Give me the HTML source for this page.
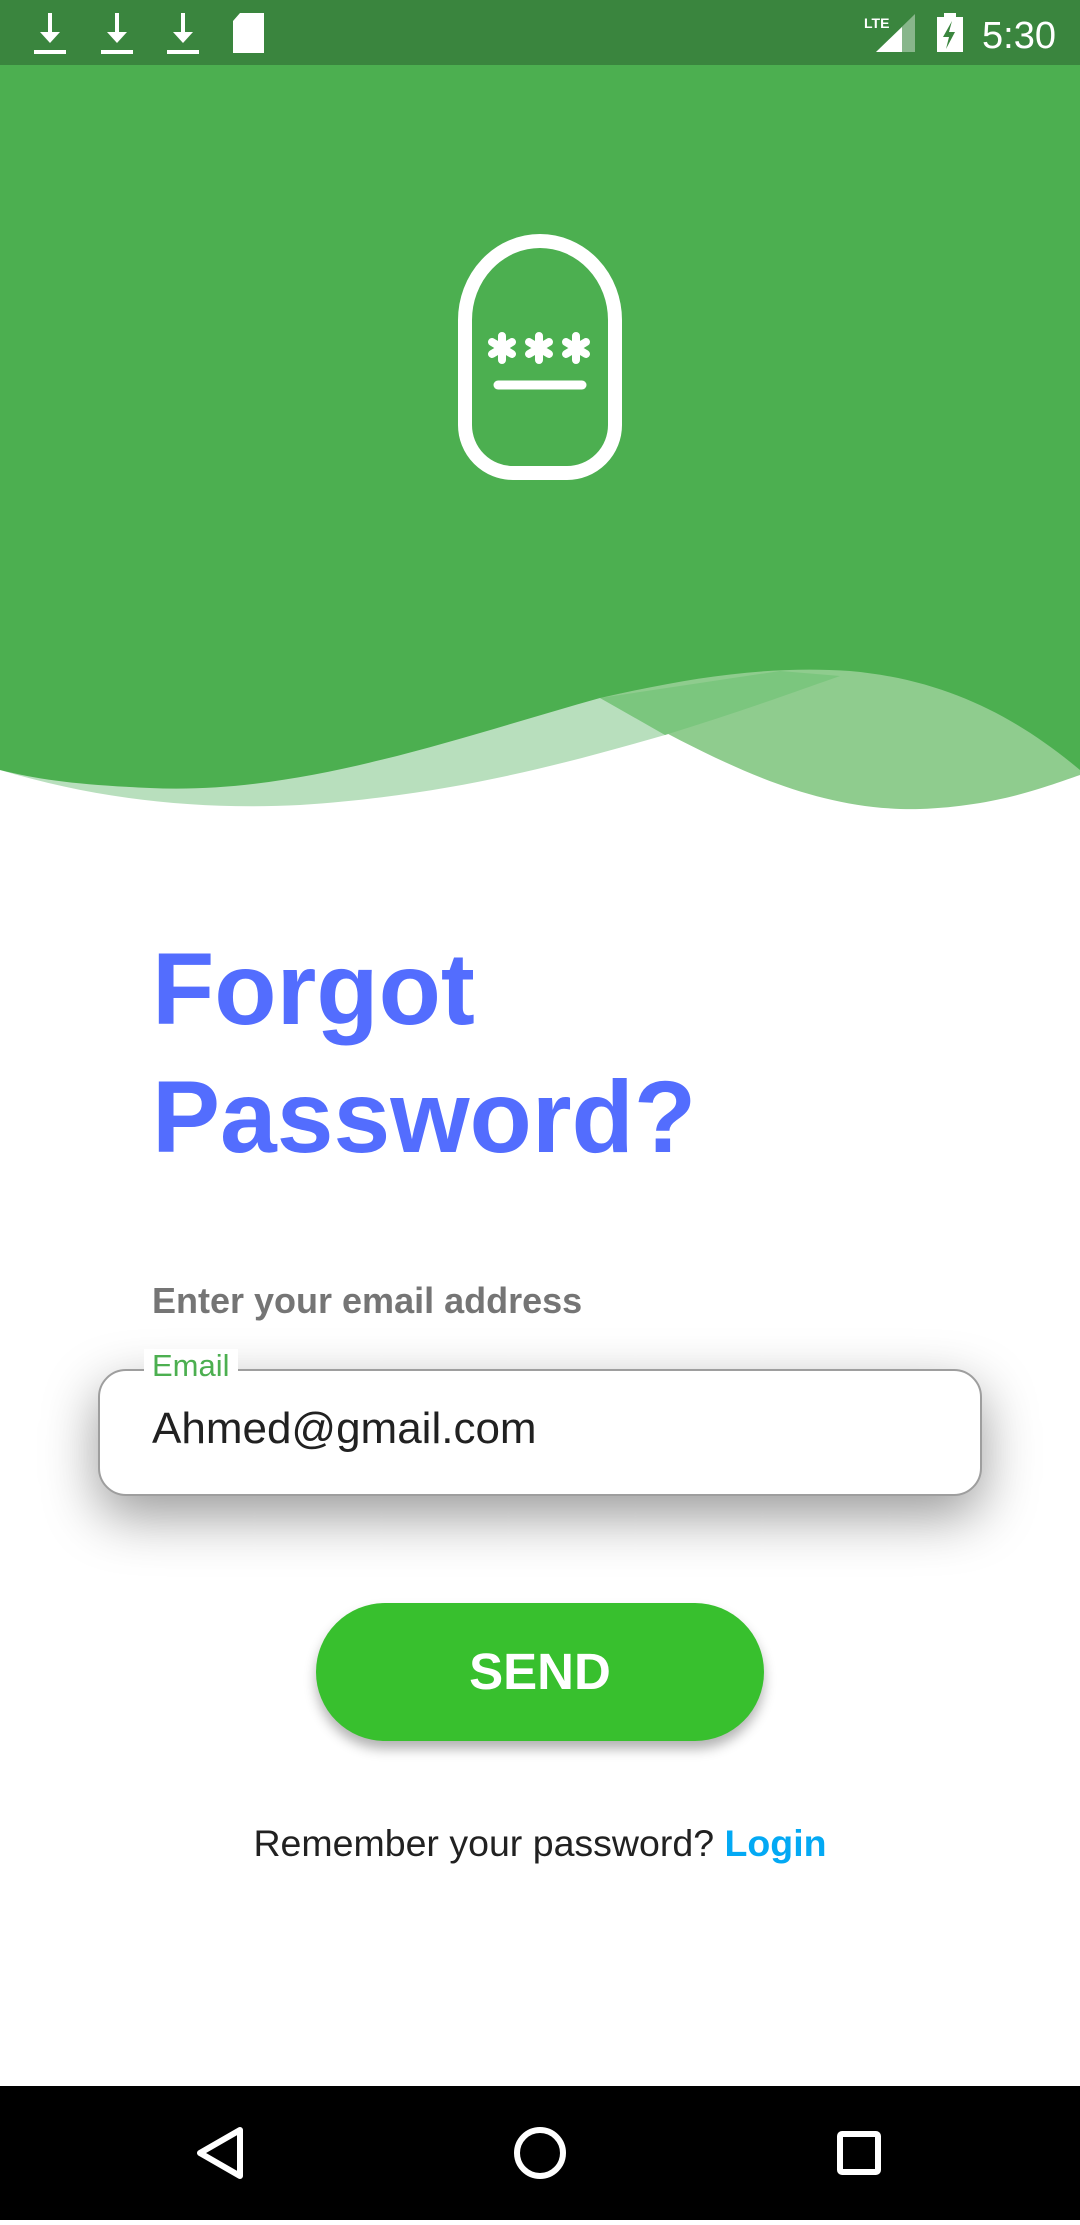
<!DOCTYPE html>
<html><head><meta charset="utf-8"><style>
*{margin:0;padding:0;box-sizing:border-box}
body{width:1080px;height:2220px;background:#fff;position:relative;overflow:hidden;font-family:"Liberation Sans",Roboto,sans-serif}
.abs{position:absolute}
</style></head><body>
<svg class="abs" style="left:0;top:0" width="1080" height="830" viewBox="0 0 1080 830">
<rect x="0" y="0" width="1080" height="830" fill="#fff"/>
<path d="M0 770 C100 800 200 810 300 805 C450 795 560 765 665 735 C740 712 800 690 840 676 L840 600 L0 600Z" fill="#b8dfbd"/>
<path d="M600 698 C700 750 800 812 920 809 C1000 806 1050 785 1080 775 V600 H600Z" fill="#8fcc8e"/>
<path d="M600 698 L665 735 C740 712 800 690 840 676 L780 671Z" fill="#7bc67e"/>
<path d="M0 0H1080V770 C1020 720 950 680 850 671 C760 665 680 680 600 698 C450 740 300 795 150 788 C80 785 40 780 0 770Z" fill="#4caf50"/>
<rect x="0" y="0" width="1080" height="65" fill="#3a853e"/>
<g fill="#fff">
<rect x="48" y="13" width="4" height="22"/><path d="M40 32h20l-10 11z"/><rect x="34" y="50" width="32" height="4"/>
<rect x="115" y="13" width="4" height="22"/><path d="M107 32h20l-10 11z"/><rect x="101" y="50" width="32" height="4"/>
<rect x="181" y="13" width="4" height="22"/><path d="M173 32h20l-10 11z"/><rect x="167" y="50" width="32" height="4"/>
<path d="M240 13h24v40h-31v-32z"/>
<path d="M876 52l39-38v38z" opacity=".4"/><path d="M876 52l26-25v25z"/>
<rect x="937" y="17" width="26" height="35"/><rect x="944" y="13" width="12" height="5"/>
<text x="982" y="48" font-size="38" font-family="Liberation Sans, sans-serif">5:30</text>
<text x="864" y="28" font-size="14" font-weight="bold" font-family="Liberation Sans, sans-serif">LTE</text>
</g>
<path d="M952 21l-9 16h6l-3 12 9-17h-6z" fill="#3a853e"/>
<path d="M465 320 A75 79 0 0 1 615 320 V425 A48 48 0 0 1 567 473 H513 A48 48 0 0 1 465 425Z" fill="none" stroke="#fff" stroke-width="14"/>
<g stroke="#fff" stroke-width="8" stroke-linecap="round">
<path d="M502 336v24M492 342l20 12M492 354l20-12"/>
<path d="M539 336v24M529 342l20 12M529 354l20-12"/>
<path d="M576 336v24M566 342l20 12M566 354l20-12"/>
<path d="M498 385h84" stroke-width="9"/>
</g>
</svg>
<div class="abs" style="left:152px;top:925px;font-size:102px;font-weight:bold;color:#536dfe;line-height:128px">Forgot<br>Password?</div>
<div class="abs" style="left:152px;top:1280px;font-size:36px;font-weight:bold;color:#757575">Enter your email address</div>
<div class="abs" style="left:98px;top:1369px;width:884px;height:127px;border:2px solid #9e9e9e;border-radius:28px;background:#fff;box-shadow:0 20px 55px rgba(0,0,0,.4)"></div>
<div class="abs" style="left:144px;top:1349px;padding:0 8px;background:#fff;color:#4caf50;font-size:31px;line-height:34px">Email</div>
<div class="abs" style="left:152px;top:1404px;font-size:44px;color:#212121">Ahmed@gmail.com</div>
<div class="abs" style="left:316px;top:1603px;width:448px;height:138px;border-radius:69px;background:#38c02e;box-shadow:0 8px 12px rgba(0,0,0,.3);color:#fff;font-weight:bold;font-size:51px;text-align:center;line-height:138px">SEND</div>
<div class="abs" style="left:0;top:1822px;width:1080px;text-align:center;font-size:37.5px;color:#212121">Remember your password? <b style="color:#03a9f4">Login</b></div>
<div class="abs" style="left:0;top:2086px;width:1080px;height:134px;background:#000">
<svg width="1080" height="134"><g fill="none" stroke="#fff" stroke-width="6">
<path d="M240 44v46l-40-23z" stroke-linejoin="round"/>
<circle cx="540" cy="67" r="23"/>
<rect x="840" y="48" width="38" height="38" rx="2"/></g></svg>
</div>
</body></html>
